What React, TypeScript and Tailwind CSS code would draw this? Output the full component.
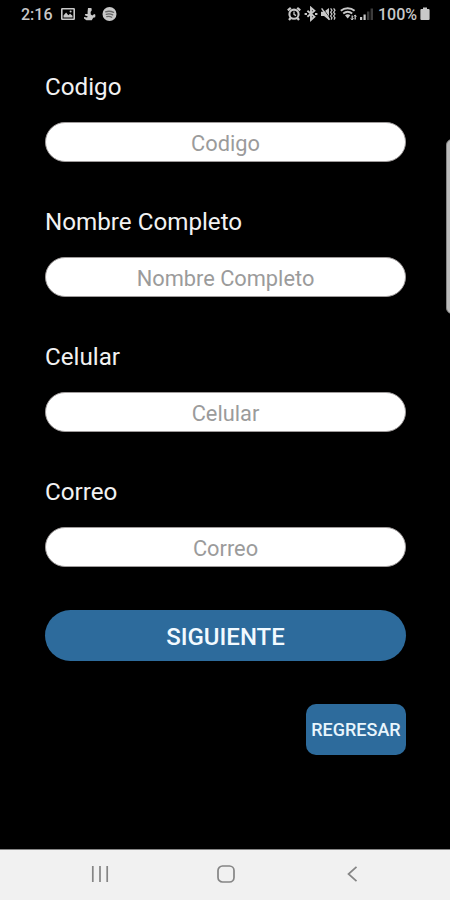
import type { ReactNode } from "react";

const fields = [
  { id: "codigo", label: "Codigo" },
  { id: "nombre", label: "Nombre Completo" },
  { id: "celular", label: "Celular" },
  { id: "correo", label: "Correo" },
];

function Icon({
  w,
  className,
  children,
}: {
  w: number;
  className?: string;
  children: ReactNode;
}) {
  return (
    <svg
      width={w}
      height={16}
      viewBox={`0 0 ${w} 16`}
      fill="none"
      stroke="currentColor"
      className={`shrink-0 ${className ?? ""}`}
      aria-hidden="true"
    >
      {children}
    </svg>
  );
}

function StatusBar() {
  return (
    <div className="flex h-7 items-center pl-[21px] pr-5 text-[16px] font-medium leading-7 text-[#c8c8c8]">
      <span className="w-10 pt-px">2:16</span>

      {/* picture */}
      <Icon w={14}>
        <rect x="0.8" y="2.8" width="12.4" height="10.4" rx="0.5" strokeWidth="1.6" />
        <path d="M2.5 11.5V9.5l2.6-3 2.2 2.8 1.8-1.6 2.4 2v1.8z" fill="currentColor" stroke="none" />
        <circle cx="9.6" cy="5.6" r="1" fill="currentColor" stroke="none" />
      </Icon>
      {/* figure */}
      <Icon w={13} className="ml-2">
        <path
          d="M5 2h3.4l.4 2.2L7.6 6l.2 2.600 1.600.8L11.200 8l1.200.8-.2 2.400-2 .6-1.400 2.400H3.400L1 12.400V11l3 .4.8-1-3-1.200.4-1.200L4.600 8V5.600z"
          fill="currentColor"
          stroke="none"
        />
      </Icon>
      {/* music */}
      <Icon w={15} className="ml-1.5">
        <circle cx="7.5" cy="8" r="7" fill="currentColor" stroke="none" />
        <g stroke="#666666" strokeWidth="1.3" strokeLinecap="round">
          <path d="M3.6 5.8c2.8-.9 5.6-.6 8 .6" />
          <path d="M4.2 8.3c2.3-.7 4.5-.5 6.5.6" />
          <path d="M4.8 10.7c1.7-.5 3.4-.3 4.9.5" />
        </g>
      </Icon>

      <div className="ml-auto flex items-center">
        {/* alarm */}
        <Icon w={14}>
          <circle cx="7" cy="8.2" r="4.6" strokeWidth="2.1" />
          <path d="M7 5.6v2.8l2 1.2" strokeWidth="1.3" />
          <path d="M.8 4.4 3.8 1.8M13.2 4.4l-3-2.6M3.6 12 2 14M10.4 12l1.6 2" strokeWidth="2.2" />
        </Icon>
        {/* bluetooth */}
        <Icon w={14} className="ml-[3px]">
          <path d="m3.4 4.8 7 6-3.4 3v-12l3.4 3-7 6" strokeWidth="1.9" />
          <path d="M.6 8h2.4M11 8h2.4" strokeWidth="2.2" />
        </Icon>
        {/* vibrate / mute */}
        <Icon w={15} className="ml-[3px]">
          <path d="M0 5.8h3L8 2v12l-5-4H0z" fill="currentColor" stroke="none" />
          <path d="m1.8 2 8 11.500" stroke="black" strokeWidth="0.8" />
          <path d="m.6 2.4 8 11.400" strokeWidth="1.5" />
          <path d="m9.6 2.4 1.4 1.900-1.400 1.900L11 8.100 9.600 10l1.400 1.900-1 1.700M12.600 2.400 14 4.300l-1.400 1.900L14 8.100 12.600 10l1.400 1.900-1 1.700" strokeWidth="1.2" />
        </Icon>
        {/* wifi */}
        <Icon w={17} className="ml-1">
          <path d="M.8 4.8c4-3.5 9.8-3.5 13.8 0M3.2 7.5c2.7-2.2 6.3-2.2 9 0" strokeWidth="1.9" />
          <path d="M5 9.2c1.8-1.3 3.7-1.3 5.4 0L7.7 12.6z" fill="currentColor" stroke="none" />
          <path d="M12.2 14V9.5M15.2 9v4.5" strokeWidth="1.3" />
          <path d="m10.8 12.4 1.4 1.6 1.4-1.600M13.800 10.400 15.200 9l1.400 1.400" strokeWidth="1" />
        </Icon>
        {/* signal */}
        <Icon w={14} className="ml-[3px]">
          <g fill="currentColor" stroke="none">
            <rect x="0" y="11" width="2.2" height="3" />
            <rect x="3.5" y="8.5" width="2.2" height="5.5" />
            <rect x="7" y="5.5" width="2.4" height="8.5" opacity=".3" />
            <rect x="10.6" y="2.5" width="2.4" height="11.5" opacity=".3" />
          </g>
        </Icon>
        <span className="ml-1 w-[42px] pt-px">100%</span>
        <Icon w={10}>
          <path d="M3 1.500h4v1.600h1.600q1 0 1 1v9q0 1-1 1H1.400q-1 0-1-1v-9q0-1 1-1H3z" fill="currentColor" stroke="none" />
        </Icon>
      </div>
    </div>
  );
}

function NavBar() {
  return (
    <nav className="flex h-[51px] items-center justify-between border-t border-[#858585] bg-[#f1f1f1] pb-[2px] pl-[91px] pr-[90px] text-[#858585]">
      <Icon w={18}>
        <path d="M1.8 0v16M9 0v16M16.200 0v16" strokeWidth="1.7" />
      </Icon>
      <svg width={18} height={18} viewBox="0 0 18 18" fill="none" stroke="currentColor" className="-ml-[3px]" aria-hidden="true">
        <rect x="1" y="1" width="16" height="16" rx="4.5" strokeWidth="1.7" />
      </svg>
      <Icon w={14}>
        <path d="M10.500.8 2.500 8l8 7.200" strokeWidth="1.7" />
      </Icon>
    </nav>
  );
}

export default function App() {
  return (
    <div className="relative flex h-[900px] w-[450px] flex-col overflow-hidden bg-black font-['Roboto',sans-serif]">
      <StatusBar />

      <form className="flex flex-1 flex-col pl-[45px] pr-11 pt-[42px]">
        {fields.map((field) => (
          <div key={field.id} className="h-[135px]">
            <label
              htmlFor={field.id}
              className="block h-[52px] text-[24.2px] leading-[34px] text-[#f2f2f2]"
            >
              {field.label}
            </label>
            <input
              id={field.id}
              placeholder={field.label}
              className="block h-10 w-full rounded-full border border-[#a09c9c] bg-white px-4 pt-0.5 text-center text-[21.8px] text-black placeholder:text-[#9b9b9b]"
            />
          </div>
        ))}

        <button
          type="button"
          className="h-[51px] shrink-0 rounded-full bg-[#2d6b9c] pt-[3px] text-[24px] font-medium leading-none text-[#f2faff]"
        >
          SIGUIENTE
        </button>
        <button
          type="button"
          className="mt-[43px] h-[51px] w-[100px] shrink-0 self-end whitespace-nowrap rounded-[10px] bg-[#2d6b9c] text-[18px] font-medium text-[#e8f5fc]"
        >
          REGRESAR
        </button>
      </form>

      <NavBar />

      {/* edge panel handle */}
      <div className="absolute -right-2 top-[139px] h-[175px] w-3 rounded-md border border-[#858585] bg-[#bcbcbc]" />
    </div>
  );
}
